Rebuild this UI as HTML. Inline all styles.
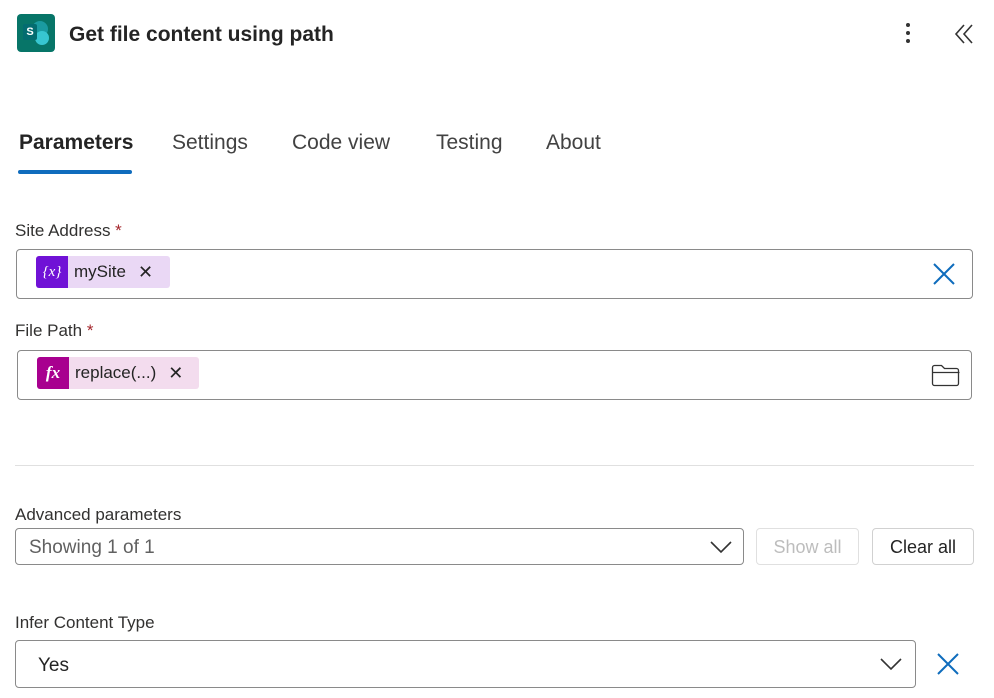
<!DOCTYPE html>
<html><head><style>
*{box-sizing:border-box;margin:0;padding:0}
body{width:994px;height:698px;background:#fff;font-family:"Liberation Sans",sans-serif;color:#242424;position:relative;overflow:hidden}
.a{position:absolute}
.lbl{font-size:17px;color:#323130}
.req{color:#a4262c}
.box{border:1px solid #8a8a8a;border-radius:4px;background:#fff}
.tok{display:flex;align-items:center;height:32px;border-radius:3px;font-size:17px}
.ic{width:32px;height:32px;display:flex;align-items:center;justify-content:center;color:#fff;font-family:"Liberation Serif",serif;font-style:italic;border-radius:3px 0 0 3px}
</style></head><body>
<div class="a" style="left:17px;top:14px;width:38px;height:38px;background:#077568;border-radius:4px">
<div class="a" style="left:15px;top:7px;width:16px;height:16px;border-radius:50%;background:#1a9ba1"></div>
<div class="a" style="left:18px;top:17px;width:14px;height:14px;border-radius:50%;background:#37c6d0"></div>
<div class="a" style="left:6px;top:10px;width:14px;height:16px;background:#036c70;border-radius:2px;color:#fff;font-size:11px;font-weight:bold;text-align:center;line-height:16px">S</div>
</div>
<div class="a" style="left:69px;top:23px;font-size:21px;font-weight:bold;color:#242424">Get file content using path</div>
<div class="a" style="left:906px;top:23px;width:4px;height:4px;border-radius:50%;background:#333;box-shadow:0 8px 0 #333,0 16px 0 #333"></div>
<svg class="a" style="left:954px;top:24px" width="22" height="20"><path d="M10 1L2 10L10 19M18 1L10 10L18 19" fill="none" stroke="#333" stroke-width="1.6"/></svg>
<div class="a" style="left:19px;top:131px;font-size:21px;font-weight:bold">Parameters</div>
<div class="a" style="left:18px;top:170px;width:114px;height:4px;background:#0f6cbd;border-radius:2px"></div>
<div class="a" style="left:172px;top:131px;font-size:21px;color:#424242">Settings</div>
<div class="a" style="left:292px;top:131px;font-size:21px;color:#424242">Code view</div>
<div class="a" style="left:436px;top:131px;font-size:21px;color:#424242">Testing</div>
<div class="a" style="left:546px;top:131px;font-size:21px;color:#424242">About</div>

<div class="a lbl" style="left:15px;top:221px">Site Address <span class="req">*</span></div>
<div class="a box" style="left:16px;top:249px;width:957px;height:50px"></div>
<div class="a tok" style="left:36px;top:256px;width:134px;background:#ead8f5"><div class="ic" style="background:#7012d6;font-size:15px">{x}</div><span style="margin-left:6px">mySite</span><span style="margin-left:12px;font-size:18px;font-weight:300">✕</span></div>
<svg class="a" style="left:933px;top:263px" width="22" height="22"><path d="M1 1L21 21M21 1L1 21" stroke="#0f6cbd" stroke-width="2"/></svg>

<div class="a lbl" style="left:15px;top:321px">File Path <span class="req">*</span></div>
<div class="a box" style="left:17px;top:350px;width:955px;height:50px"></div>
<div class="a tok" style="left:37px;top:357px;width:162px;background:#f3dcee"><div class="ic" style="background:#a8008f;font-size:17px;font-weight:bold">fx</div><span style="margin-left:6px">replace(...)</span><span style="margin-left:12px;font-size:18px">✕</span></div>
<svg class="a" style="left:931px;top:363px" width="30" height="24"><path d="M1.5 4.5a2 2 0 0 1 2-2h7l3 3h12a2 2 0 0 1 2 2v13a2 2 0 0 1-2 2h-22a2 2 0 0 1-2-2zM1.5 9.5h27" fill="none" stroke="#333" stroke-width="1.3"/></svg>

<div class="a" style="left:15px;top:465px;width:959px;height:1px;background:#e0e0e0"></div>
<div class="a lbl" style="left:15px;top:505px">Advanced parameters</div>
<div class="a box" style="left:15px;top:528px;width:729px;height:37px;font-size:19px;color:#616161;padding:8px 13px">Showing 1 of 1</div>
<svg class="a" style="left:710px;top:540px" width="22" height="14"><path d="M1 2L11 12L21 2" fill="none" stroke="#333" stroke-width="1.6"/></svg>
<div class="a" style="left:756px;top:528px;width:103px;height:37px;border:1px solid #e0e0e0;border-radius:4px;color:#bdbdbd;font-size:18px;text-align:center;line-height:37px">Show all</div>
<div class="a" style="left:872px;top:528px;width:102px;height:37px;border:1px solid #d1d1d1;border-radius:4px;font-size:18px;text-align:center;line-height:37px">Clear all</div>

<div class="a lbl" style="left:15px;top:613px">Infer Content Type</div>
<div class="a box" style="left:15px;top:640px;width:901px;height:48px;font-size:19px;padding:14px 22px">Yes</div>
<svg class="a" style="left:880px;top:657px" width="22" height="14"><path d="M1 2L11 12L21 2" fill="none" stroke="#333" stroke-width="1.6"/></svg>
<svg class="a" style="left:937px;top:653px" width="22" height="22"><path d="M1 1L21 21M21 1L1 21" stroke="#0f6cbd" stroke-width="2"/></svg>
</body></html>
